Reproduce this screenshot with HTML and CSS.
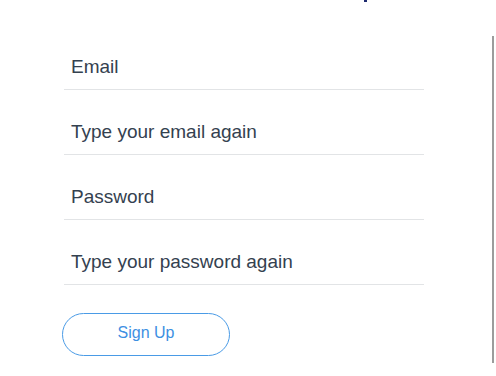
FILE: index.html
```html
<!DOCTYPE html>
<html lang="en">
<head>
<meta charset="utf-8">
<title>Sign Up</title>
<link rel="stylesheet" href="styles.css">
</head>
<body>
<span class="top-mark"></span>
<form class="form">
  <div class="field"><span class="placeholder">Email</span></div>
  <div class="field"><span class="placeholder">Type your email again</span></div>
  <div class="field"><span class="placeholder">Password</span></div>
  <div class="field"><span class="placeholder">Type your password again</span></div>
  <button type="button" class="signup">Sign Up</button>
</form>
<div class="panel-edge"></div>
</body>
</html>
```
FILE: styles.css
```css
html, body {
  margin: 0;
  padding: 0;
  background: #ffffff;
}
body {
  position: relative;
  width: 496px;
  height: 376px;
  overflow: hidden;
  font-family: "Liberation Sans", Arial, sans-serif;
}
.form {
  width: 360px;
  margin: 0 0 0 64px;
  padding-top: 25px;
  display: flex;
  flex-direction: column;
  align-items: flex-start;
}
.field {
  box-sizing: border-box;
  width: 360px;
  height: 65px;
  border-bottom: 1px solid #e2e4e6;
  display: flex;
  align-items: flex-end;
  padding: 0 0 11px 7px;
}
.placeholder {
  font-size: 19px;
  line-height: 22px;
  color: #34414f;
}
.signup {
  box-sizing: border-box;
  margin: 28px 0 0 -2px;
  width: 168px;
  height: 43px;
  border: 1px solid #4a9be6;
  border-radius: 22px;
  background: #ffffff;
  color: #3d8fe2;
  font-family: "Liberation Sans", Arial, sans-serif;
  font-size: 16px;
  padding: 0 0 3px 0;
}
.panel-edge {
  position: absolute;
  left: 492px;
  top: 36px;
  width: 2px;
  height: 327px;
  background: #9c9c9c;
}
.top-mark {
  position: absolute;
  left: 364px;
  top: 0;
  width: 3px;
  height: 2px;
  background: #1d2a6e;
}
```
